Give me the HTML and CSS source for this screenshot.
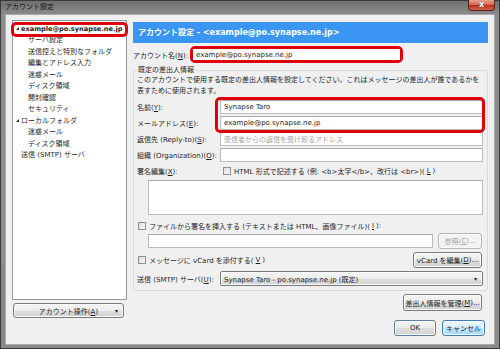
FILE: index.html
```html
<!DOCTYPE html>
<html lang="ja">
<head>
    <meta charset="UTF-8">
    <meta name="viewport" content="width=device-width, initial-scale=1.0">
    <title>アカウント設定</title>
    <link rel="stylesheet" href="styles.css">
</head>
<body>
<div class="window">
    <div class="titlebar">
        <span class="title">アカウント設定</span>
        <span class="close">x</span>
    </div>

    <div class="client">
        <!-- 左側: アカウントツリー -->
        <div class="sidebar">
            <ul class="tree">
                <li class="root marked"><i class="arrow"></i><b>example@po.synapse.ne.jp</b></li>
                <li class="child">サーバ設定</li>
                <li class="child">送信控えと特別なフォルダ</li>
                <li class="child">編集とアドレス入力</li>
                <li class="child">迷惑メール</li>
                <li class="child">ディスク領域</li>
                <li class="child">開封確認</li>
                <li class="child">セキュリティ</li>
                <li class="root"><i class="arrow"></i>ローカルフォルダ</li>
                <li class="child">迷惑メール</li>
                <li class="child">ディスク領域</li>
                <li class="leaf">送信 (SMTP) サーバ</li>
            </ul>
            <div class="btn acct-btn"><span class="acct-label">アカウント操作(<u>A</u>)</span><span class="drop">▾</span></div>
        </div>

        <!-- 右側: 設定内容 -->
        <div class="main">
            <div class="pane-title">アカウント設定 - &lt;example@po.synapse.ne.jp&gt;</div>

            <div class="acct-row">
                <span class="acct-name">アカウント名(<u>N</u>):</span>
                <div class="mark-box">
                    <div class="input">example@po.synapse.ne.jp</div>
                </div>
            </div>

            <fieldset class="group">
                <legend>既定の差出人情報</legend>
                <p class="desc">このアカウントで使用する既定の差出人情報を設定してください。これはメッセージの差出人が誰であるかを<br>表すために使用されます。</p>

                <div class="fields">
                    <span class="label">名前(<u>Y</u>):</span>
                    <div class="input">Synapse Taro</div>
                    <span class="label">メールアドレス(<u>E</u>):</span>
                    <div class="input">example@po.synapse.ne.jp</div>
                    <span class="label">返信先 (Reply-to)(<u>S</u>):</span>
                    <div class="input placeholder">受信者からの返信を受け取るアドレス</div>
                    <span class="label">組織 (Organization)(<u>O</u>):</span>
                    <div class="input"></div>
                    <span class="label">署名編集(<u>X</u>):</span>
                    <div class="check-row sig-check"><i class="check"></i>HTML 形式で記述する (例: &lt;b&gt;太字&lt;/b&gt;、改行は &lt;br&gt;)(<u>L</u>)</div>
                    <div class="mark"></div>
                </div>

                <div class="input textarea"></div>

                <div class="check-row file-check"><i class="check"></i>ファイルから署名を挿入する (テキストまたは HTML、画像ファイル)(<u>I</u>):</div>
                <div class="file-row">
                    <div class="input file-input"></div>
                    <div class="btn disabled browse">参照(<u>C</u>)...</div>
                </div>

                <div class="vcard-row">
                    <div class="check-row"><i class="check"></i>メッセージに vCard を添付する(<u>V</u>)</div>
                    <div class="btn vcard-btn">vCard を編集(<u>D</u>)...</div>
                </div>

                <div class="smtp-row">
                    <span class="label">送信 (SMTP) サーバ(<u>U</u>):</span>
                    <div class="btn select"><span>Synapse Taro - po.synapse.ne.jp (既定)</span><span class="drop">▾</span></div>
                </div>
            </fieldset>

            <div class="manage-row">
                <div class="btn manage-btn">差出人情報を管理(<u>M</u>)...</div>
            </div>

            <div class="dialog-btns">
                <div class="btn ok">OK</div>
                <div class="btn cancel">キャンセル</div>
            </div>
        </div>
    </div>
</div>
</body>
</html>
```

FILE: styles.css
```css
:root {
    --text-color: #1e1e1e;
    --mark-color: #e0000c;
    --field-border: #b5bcc4;
    --btn-border: #7a7a7a;
}

body {
    margin: 0;
    font-family: "DejaVu Sans", "Noto Sans CJK JP", sans-serif;
    font-size: 7px;
    color: var(--text-color);
    background-color: #888;
}

u {
    text-decoration: underline;
    text-underline-offset: 1px;
}

/* ウィンドウ枠 */
.window {
    width: 500px;
    height: 349px;
    box-sizing: border-box;
    border: 1px solid #3a3a3a;
    background: linear-gradient(to bottom, #707070 0, #8c8c8c 14px, #8a8a8a 100%);
    display: flex;
    flex-direction: column;
}

.titlebar {
    height: 14px;
    display: flex;
    justify-content: space-between;
    align-items: flex-start;
    padding-left: 4px;
}

.title {
    line-height: 13px;
    color: #111;
}

.close {
    width: 27px;
    height: 11px;
    margin-right: 4px;
    margin-top: -1px;
    box-sizing: border-box;
    border: 1px solid #5a2018;
    border-top: none;
    border-radius: 0 0 4px 4px;
    background: linear-gradient(to bottom, #e6a496 0, #cf6a56 45%, #b9321c 55%, #d0654c 100%);
    color: #fff;
    font: bold 8px/10px "DejaVu Sans", sans-serif;
    text-align: center;
    text-shadow: 0 0 1px #333;
}

.client {
    height: 329px;
    margin: 0 5px;
    box-sizing: border-box;
    background-color: #f0f0f0;
    padding: 5px 6px 0;
    display: flex;
    gap: 6px;
    box-shadow: 0 0 0 1px #a9a9a9;
}

/* 左側ツリー */
.sidebar {
    width: 115px;
    display: flex;
    flex-direction: column;
    gap: 3px;
}

.tree {
    list-style: none;
    margin: 0;
    padding: 2.5px 0 0;
    height: 280px;
    box-sizing: border-box;
    background-color: #fff;
    border: 1px solid #8e9aa6;
}

.tree li {
    line-height: 11.5px;
    white-space: nowrap;
}

.tree .root {
    padding-left: 2px;
}

.tree .root b {
    font-size: 6.6px;
}

.tree .child {
    padding-left: 15px;
}

.tree .leaf {
    padding-left: 8px;
}

.arrow {
    display: inline-block;
    width: 0;
    height: 0;
    border-left: 3px solid transparent;
    border-bottom: 3px solid #2b2b2b;
    margin: 0 2px 1px 1px;
    vertical-align: middle;
}

.marked {
    position: relative;
}

.marked::after {
    content: "";
    position: absolute;
    top: -2px;
    bottom: -2px;
    left: -2px;
    right: -2px;
    border: 3px solid var(--mark-color);
    border-radius: 5px;
}

/* ボタン */
.btn {
    display: flex;
    align-items: center;
    justify-content: center;
    box-sizing: border-box;
    border: 1px solid var(--btn-border);
    border-radius: 3px;
    background: linear-gradient(to bottom, #f4f4f4 0, #ececec 50%, #dedede 50%, #d2d2d2 100%);
    box-shadow: inset 0 0 0 1px #fafafa;
    white-space: nowrap;
}

.btn.disabled {
    color: #a3a3a3;
    border-color: #b3b6b9;
    background: #f3f3f3;
}

.acct-btn {
    height: 15px;
    margin-left: 1px;
    width: 111px;
    padding: 0 5px 0 8px;
}

.acct-label {
    flex: 1;
    text-align: center;
}

.drop {
    font-size: 6px;
}

/* 右側 */
.main {
    flex: 1;
    display: flex;
    flex-direction: column;
}

.pane-title {
    margin-top: 2px;
    height: 21px;
    line-height: 21px;
    padding-left: 5px;
    background-color: #3a96f2;
    color: #fff;
    font-weight: bold;
    font-size: 8px;
    white-space: nowrap;
}

.acct-row {
    margin-top: 3px;
    display: flex;
    align-items: center;
}

.acct-name {
    width: 57px;
}

.mark-box {
    width: 213px;
    height: 17px;
    box-sizing: border-box;
    border: 3px solid var(--mark-color);
    border-radius: 5px;
    display: flex;
}

.mark-box .input {
    flex: 1;
    height: auto;
    border: none;
    padding-left: 3px;
}

.input {
    height: 14px;
    box-sizing: border-box;
    background-color: #fff;
    border: 1px solid var(--field-border);
    border-top-color: #a4abb3;
    padding-left: 3px;
    display: flex;
    align-items: center;
    white-space: nowrap;
}

.input.placeholder {
    color: #a6a6a6;
}

.group {
    margin: 2px 0 0;
    padding: 0 4px 4px 3px;
    border: 1px solid #d5dbe1;
    border-radius: 3px;
    min-width: 0;
}

.group legend {
    padding: 0 1px;
    line-height: 10px;
}

.desc {
    margin: 0;
    line-height: 11px;
    white-space: nowrap;
}

.fields {
    position: relative;
    margin-top: 3px;
    display: grid;
    grid-template-columns: 83px 1fr;
    grid-auto-rows: 14px;
    row-gap: 2px;
    align-items: center;
}

.fields .input {
    height: 14px;
}

/* 名前とメールアドレスを囲む赤枠 */
.mark {
    position: absolute;
    grid-column: 2;
    grid-row: 1 / span 2;
    top: -3px;
    bottom: -3px;
    left: -5px;
    right: -2px;
    border: 3px solid var(--mark-color);
    border-radius: 5px;
}

.check-row {
    display: flex;
    align-items: center;
    gap: 2px;
    white-space: nowrap;
}

.check {
    display: inline-block;
    width: 8px;
    height: 8px;
    box-sizing: border-box;
    border: 1px solid #8f8f8f;
    background: linear-gradient(to bottom right, #dcdcdc, #fbfbfb);
    margin-right: 1px;
}

.sig-check {
    padding-left: 3px;
}

.textarea {
    height: 35px;
    margin: 2px 0 0 11px;
}

.file-check {
    margin-top: 4px;
    height: 14px;
    padding-left: 1px;
}

.file-row {
    display: flex;
    align-items: center;
    gap: 5px;
    margin-left: 11px;
    height: 16px;
}

.file-input {
    flex: 1;
}

.browse {
    width: 44px;
    height: 16px;
    margin-right: 1px;
}

.vcard-row {
    margin-top: 3px;
    height: 16px;
    display: flex;
    justify-content: space-between;
    align-items: center;
    padding-left: 1px;
}

.vcard-btn {
    width: 69px;
    height: 16px;
    margin-right: 1px;
}

.smtp-row {
    margin-top: 3px;
    display: flex;
    align-items: center;
}

.smtp-row .label {
    width: 83px;
}

.select {
    flex: 1;
    height: 15px;
    justify-content: space-between;
    padding: 0 5px 0 3px;
    border-radius: 2px;
}

.manage-row {
    margin-top: 3px;
    display: flex;
    justify-content: flex-end;
    padding-right: 6px;
}

.manage-btn {
    width: 79px;
    height: 17px;
}

.dialog-btns {
    margin-top: 9px;
    display: flex;
    justify-content: flex-end;
    gap: 6px;
    padding-right: 3px;
}

.ok {
    width: 42px;
    height: 16px;
    border-color: #5d7d9e;
}

.cancel {
    width: 43px;
    height: 16px;
    border-color: #3c7fb1;
    background: linear-gradient(to bottom, #eaf6fd 0, #d9f0fc 50%, #bee6fd 50%, #a7d9f5 100%);
}
```
